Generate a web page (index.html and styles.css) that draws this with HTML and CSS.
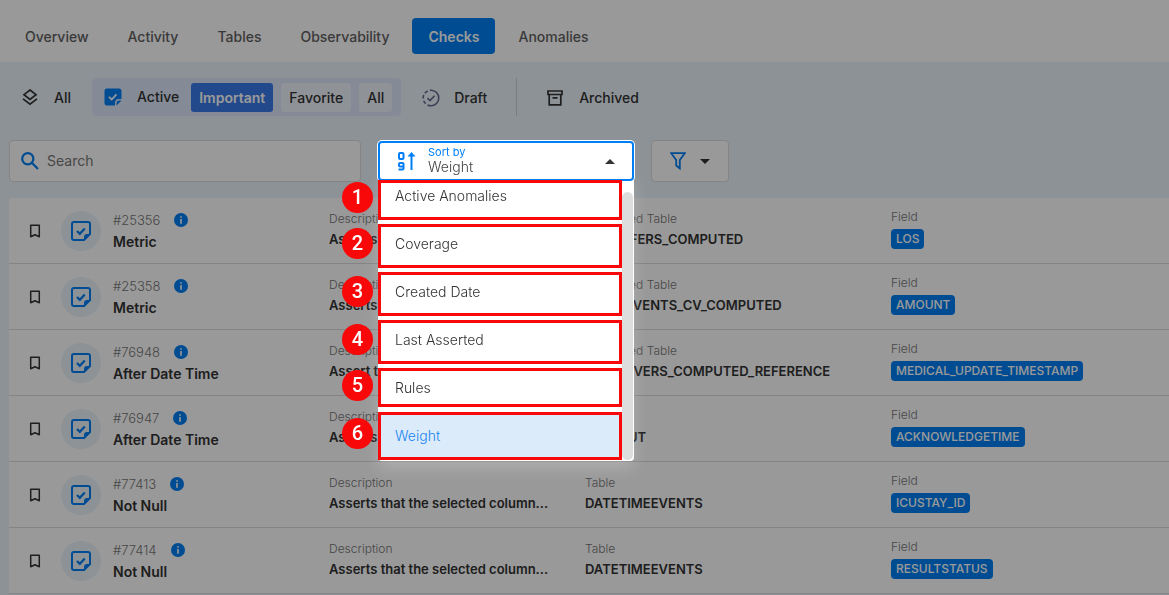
FILE: index.html
```html
<!DOCTYPE html>
<html lang="en">

<head>
    <meta charset="UTF-8">
    <meta name="viewport" content="width=device-width, initial-scale=1.0">
    <title>Checks</title>
    <link rel="stylesheet" href="styles.css">
</head>

<body>
    <!-- shared icons -->
    <svg class="sprite" aria-hidden="true">
        <symbol id="bookmark" viewBox="0 0 16 16">
            <path d="M3.7 2.2h8.6v11.6L8 11.8l-4.3 2z" fill="none" stroke="currentColor" stroke-width="1.5" stroke-linejoin="round" />
        </symbol>
        <symbol id="check" viewBox="0 0 20 20">
            <path d="M19 13V3a2 2 0 0 0-2-2H3a2 2 0 0 0-2 2v14a2 2 0 0 0 2 2h10z" fill="none" stroke="currentColor" stroke-width="2" stroke-linejoin="round" />
            <path d="M13 19.800V16q0-3 3-3h3.800z" fill="currentColor" />
            <path d="M6 10l2.800 2.800 5-5.400" fill="none" stroke="currentColor" stroke-width="2.200" />
        </symbol>
        <symbol id="info" viewBox="0 0 14 14">
            <circle cx="7" cy="7" r="7" fill="currentColor" />
            <path d="M6.200 3.200h1.600v1.600H6.200zM6.200 6h1.600v4.800H6.200z" fill="#fff" />
        </symbol>
    </svg>

    <header>
        <nav>
            <a href="#">Overview</a>
            <a href="#">Activity</a>
            <a href="#">Tables</a>
            <a href="#">Observability</a>
            <a href="#" class="current">Checks</a>
            <a href="#">Anomalies</a>
        </nav>
    </header>

    <main>
        <div class="filters">
            <button class="filter">
                <svg width="16" height="18" viewBox="0 0 16 18" fill="none" stroke="currentColor" stroke-width="1.700">
                    <path d="M8 1l6 4.700-6 4.700-6-4.700z" />
                    <path d="M1 9.800l7 5.400 7-5.400" />
                </svg>
                All
            </button>
            <div class="group">
                <button class="filter">
                    <svg class="blue" width="18" height="18" viewBox="0 0 18 18">
                        <path d="M3 .5h12A2.500 2.500 0 0 1 17.500 3v8h-2.500q-4 0-4 4v2.500H3A2.500 2.500 0 0 1 .5 15V3A2.500 2.500 0 0 1 3 .5z" fill="currentColor" />
                        <path d="M12.500 17.500v-2q0-3 3-3h2z" fill="currentColor" />
                        <path d="M5 8.800l2.700 2.700 4.800-5.100" fill="none" stroke="#fff" stroke-width="1.700" />
                    </svg>
                    Active
                </button>
                <button class="pill selected">Important</button>
                <button class="pill">Favorite</button>
                <button class="pill">All</button>
            </div>
            <button class="filter draft">
                <svg width="18" height="18" viewBox="0 0 18 18" fill="none" stroke="currentColor" stroke-width="1.600">
                    <path d="M9 1.200a7.800 7.800 0 0 1 0 15.600" />
                    <path d="M9 16.800a7.800 7.800 0 0 1 0-15.600" stroke-dasharray="3.600 2.200" />
                    <path d="M5.500 9.200l2.500 2.400 4.600-4.800" />
                </svg>
                Draft
            </button>
            <button class="filter archived">
                <svg width="16" height="16" viewBox="0 0 16 16" fill="none" stroke="currentColor" stroke-width="1.700">
                    <path d="M1 1h14v3.500H1zM2.200 4.500v10.300h11.600V4.500M5.500 7.800h5" />
                </svg>
                Archived
            </button>
        </div>

        <div class="toolbar">
            <div class="search">
                <svg width="18" height="18" viewBox="0 0 18 18" fill="none" stroke="currentColor" stroke-width="2.200">
                    <circle cx="6.800" cy="6.800" r="5.600" />
                    <path d="M10.800 10.800l6.200 6.200" />
                </svg>
                <input type="search" placeholder="Search" aria-label="Search">
            </div>

            <div class="sort">
                <div class="field">
                    <svg width="18" height="20" viewBox="0 0 18 20" fill="none" stroke="currentColor" stroke-width="2">
                        <rect x="1" y="2" width="4.500" height="6" rx="1" />
                        <path d="M.5 18.500h4a1 1 0 0 0 1-1v-4.500a1 1 0 0 0-1-1H2a1 1 0 0 0-1 1v1.500a1 1 0 0 0 1 1h3.500" />
                        <path d="M13.500 19V3" />
                        <path d="M9.500 5.500l4-4.500 4 4.500z" fill="currentColor" stroke="none" />
                    </svg>
                    <div class="control">
                        <label for="sort">Sort by</label>
                        <select id="sort">
                            <option>Weight</option>
                        </select>
                    </div>
                    <svg class="caret" width="10" height="5" viewBox="0 0 10 5">
                        <path d="M0 5l5-5 5 5z" fill="currentColor" />
                    </svg>
                </div>
                <div class="menu">
                    <ul role="listbox" aria-label="Sort by">
                        <li role="option">Active Anomalies<span class="mark first"><b>1</b></span></li>
                        <li role="option">Coverage<span class="mark"><b>2</b></span></li>
                        <li role="option">Created Date<span class="mark"><b>3</b></span></li>
                        <li role="option">Last Asserted<span class="mark"><b>4</b></span></li>
                        <li role="option">Rules<span class="mark short"><b>5</b></span></li>
                        <li role="option" aria-selected="true">Weight<span class="mark full"><b>6</b></span></li>
                    </ul>
                    <div class="scrollbar"></div>
                </div>
            </div>

            <button class="funnel" aria-label="Filter">
                <svg class="blue" width="16" height="18" viewBox="0 0 16 18" fill="none" stroke="currentColor" stroke-width="1.800">
                    <path d="M1.200 1.200h13.600L9.800 8v8.500L6.200 13.500V8z" />
                </svg>
                <svg width="10" height="5" viewBox="0 0 10 5">
                    <path d="M0 0l5 5 5-5z" fill="currentColor" />
                </svg>
            </button>
        </div>

        <ul class="checks">
            <li>
                <button class="save" aria-label="Bookmark"><svg width="16" height="16"><use href="#bookmark" /></svg></button>
                <span class="avatar"><svg width="20" height="20"><use href="#check" /></svg></span>
                <div class="name">
                    <p>#25356 <svg width="14" height="14"><use href="#info" /></svg></p>
                    <h3>Metric</h3>
                </div>
                <div class="cell">
                    <p>Description</p>
                    <strong>Asserts that the selected column...</strong>
                </div>
                <div class="cell">
                    <p>Computed Table</p>
                    <strong>TRANSFERS_COMPUTED</strong>
                </div>
                <div class="cell tagged">
                    <p>Field</p>
                    <span class="tag">LOS</span>
                </div>
            </li>
            <li>
                <button class="save" aria-label="Bookmark"><svg width="16" height="16"><use href="#bookmark" /></svg></button>
                <span class="avatar"><svg width="20" height="20"><use href="#check" /></svg></span>
                <div class="name">
                    <p>#25358 <svg width="14" height="14"><use href="#info" /></svg></p>
                    <h3>Metric</h3>
                </div>
                <div class="cell">
                    <p>Description</p>
                    <strong>Asserts that the selected column...</strong>
                </div>
                <div class="cell">
                    <p>Computed Table</p>
                    <strong>INPUTEVENTS_CV_COMPUTED</strong>
                </div>
                <div class="cell tagged">
                    <p>Field</p>
                    <span class="tag">AMOUNT</span>
                </div>
            </li>
            <li>
                <button class="save" aria-label="Bookmark"><svg width="16" height="16"><use href="#bookmark" /></svg></button>
                <span class="avatar"><svg width="20" height="20"><use href="#check" /></svg></span>
                <div class="name">
                    <p>#76948 <svg width="14" height="14"><use href="#info" /></svg></p>
                    <h3>After Date Time</h3>
                </div>
                <div class="cell">
                    <p>Description</p>
                    <strong>Assert that the selected column...</strong>
                </div>
                <div class="cell">
                    <p>Computed Table</p>
                    <strong>CAREGIVERS_COMPUTED_REFERENCE</strong>
                </div>
                <div class="cell tagged">
                    <p>Field</p>
                    <span class="tag">MEDICAL_UPDATE_TIMESTAMP</span>
                </div>
            </li>
            <li>
                <button class="save" aria-label="Bookmark"><svg width="16" height="16"><use href="#bookmark" /></svg></button>
                <span class="avatar"><svg width="20" height="20"><use href="#check" /></svg></span>
                <div class="name">
                    <p>#76947 <svg width="14" height="14"><use href="#info" /></svg></p>
                    <h3>After Date Time</h3>
                </div>
                <div class="cell">
                    <p>Description</p>
                    <strong>Asserts that the selected column...</strong>
                </div>
                <div class="cell">
                    <p>Table</p>
                    <strong>CALLOUT</strong>
                </div>
                <div class="cell tagged">
                    <p>Field</p>
                    <span class="tag">ACKNOWLEDGETIME</span>
                </div>
            </li>
            <li>
                <button class="save" aria-label="Bookmark"><svg width="16" height="16"><use href="#bookmark" /></svg></button>
                <span class="avatar"><svg width="20" height="20"><use href="#check" /></svg></span>
                <div class="name">
                    <p>#77413 <svg width="14" height="14"><use href="#info" /></svg></p>
                    <h3>Not Null</h3>
                </div>
                <div class="cell">
                    <p>Description</p>
                    <strong>Asserts that the selected column...</strong>
                </div>
                <div class="cell">
                    <p>Table</p>
                    <strong>DATETIMEEVENTS</strong>
                </div>
                <div class="cell tagged">
                    <p>Field</p>
                    <span class="tag">ICUSTAY_ID</span>
                </div>
            </li>
            <li>
                <button class="save" aria-label="Bookmark"><svg width="16" height="16"><use href="#bookmark" /></svg></button>
                <span class="avatar"><svg width="20" height="20"><use href="#check" /></svg></span>
                <div class="name">
                    <p>#77414 <svg width="14" height="14"><use href="#info" /></svg></p>
                    <h3>Not Null</h3>
                </div>
                <div class="cell">
                    <p>Description</p>
                    <strong>Asserts that the selected column...</strong>
                </div>
                <div class="cell">
                    <p>Table</p>
                    <strong>DATETIMEEVENTS</strong>
                </div>
                <div class="cell tagged">
                    <p>Field</p>
                    <span class="tag">RESULTSTATUS</span>
                </div>
            </li>
        </ul>
    </main>

    <div class="overlay"></div>
</body>

</html>
```
FILE: styles.css
```css
* {
    box-sizing: border-box;
    margin: 0;
    padding: 0;
    font-family: Inter, 'Open Sans', 'Liberation Sans', sans-serif;
}

body {
    min-height: 100vh;
    background: #ecf4fa;
    color: #333;
    font-size: 14px;
    line-height: 20px;
    overflow: hidden;
}

ul {
    list-style: none;
}

button {
    border: 0;
    background: none;
    color: inherit;
    font-size: 14px;
    line-height: 20px;
    cursor: pointer;
}

svg {
    display: block;
    flex: none;
}

.sprite {
    position: absolute;
    width: 0;
    height: 0;
}

.blue {
    color: #007ff5;
}

.overlay {
    position: fixed;
    inset: 0;
    background: rgba(0, 0, 0, 0.4);
    z-index: 1;
}

header {
    background: #fff;
    padding: 18px 9px 8px;
}

nav {
    display: flex;
    gap: 7px;

    a {
        padding: 9px 16px 7px;
        border-radius: 4px;
        color: #5f5f5f;
        font-weight: 500;
        text-decoration: none;
    }

    .current {
        background: #007ff5;
        color: #fff;
        font-weight: 600;
    }
}

main {
    padding: 16px 0 0 9px;
}

.filters {
    display: flex;
    align-items: center;
    margin-bottom: 24px;
}

.filter {
    display: flex;
    align-items: center;
    gap: 16px;
    height: 38px;
    padding: 1px 13px 0;
    font-weight: 500;
}

.group {
    display: flex;
    align-items: center;
    gap: 8px;
    margin: 0 8px;
    padding-right: 9px;
    border-radius: 4px;
    background: #dde8fa;

    .filter {
        gap: 15px;
        padding: 0 4px 0 12px;
    }
}

.pill {
    padding: 5px 8px 4px;
    height: 29px;
    border-radius: 3px;
    background: #eff4fc;
    font-weight: 500;

    &.selected {
        background: #3a7bea;
        color: #fff;
        font-weight: 600;
    }
}

.draft {
    gap: 14px;

    svg {
        color: #66688c;
    }
}

.archived {
    margin-left: 16px;
    padding-left: 30px;
    border-left: 1px solid #c8d0d8;
}

.toolbar {
    display: grid;
    grid-template-columns: minmax(0, 352px) minmax(0, 256px) 78px;
    gap: 17px;
    height: 42px;
    margin-bottom: 16px;
}

.search {
    display: flex;
    align-items: center;
    gap: 8px;
    padding: 0 11px;
    border: 1px solid #dcdcdc;
    border-radius: 4px;
    background: #fff;
    color: #007ff5;

    input {
        flex: 1;
        min-width: 0;
        border: 0;
        outline: 0;
        background: none;
        font-size: 14px;
        line-height: 20px;
    }

    input::placeholder {
        color: #777;
    }
}

.funnel {
    display: flex;
    align-items: center;
    justify-content: center;
    gap: 14px;
    border: 1px solid #dcdcdc;
    border-radius: 4px;
    background: #fff;
}

.sort {
    position: relative;
    z-index: 2;
    padding: 1px 0;
}

.field {
    position: relative;
    z-index: 1;
    display: flex;
    align-items: center;
    gap: 12px;
    height: 40px;
    padding: 0 17px 0 18px;
    border: 2px solid #007ff5;
    border-radius: 4px;
    background: #fff;
    color: #007ff5;
    box-shadow: 0 0 0 1px #fff;
}

.control {
    display: flex;
    flex: 1;
    flex-direction: column;

    label {
        font-size: 11px;
        line-height: 12px;
    }

    select {
        appearance: none;
        border: 0;
        outline: 0;
        background: none;
        color: #444;
        font-size: 14px;
        font-weight: 300;
        line-height: 18px;
    }
}

.caret {
    color: #333;
}

.menu {
    position: absolute;
    top: 32px;
    left: 0;
    right: 0;
    display: flex;
    padding-bottom: 1px;
    border-radius: 4px;
    background: #fff;
    box-shadow: 0 8px 16px rgba(255, 255, 255, 0.2);

    ul {
        flex: 1;
    }

    li {
        position: relative;
        height: 48px;
        padding: 14px 17px;
        color: #333;
        font-weight: 300;
    }

    [aria-selected] {
        background: #dcebfa;
        color: #1a86f0;
    }
}

.scrollbar {
    width: 11px;
    margin: 20px 1px 0 0;
    border-radius: 6px;
    background: #ddd;
}

/* numbered frames over the options */
.mark {
    position: absolute;
    inset: 4px 0 0;
    z-index: 2;
    border: 3px solid #f80808;

    &.first {
        top: 8px;
    }

    &.short {
        bottom: 5px;
    }

    &.full {
        top: 0;
    }

    b {
        position: absolute;
        top: calc(50% - 18px);
        left: -39px;
        width: 31px;
        height: 31px;
        border-radius: 50%;
        background: #f80808;
        color: #fff;
        font-family: Roboto, sans-serif;
        font-size: 20px;
        font-weight: 500;
        line-height: 31px;
        text-align: center;
    }
}

.checks {
    border-radius: 4px 0 0;
    background: #fff;

    li {
        display: grid;
        grid-template-columns: 52px 52px 216fr 256fr 306fr 278fr;
        align-items: center;
        height: 66px;
        border-bottom: 1px solid #dcdcdc;
    }
}

.save {
    padding-left: 18px;
}

.avatar {
    display: grid;
    place-content: center;
    width: 40px;
    height: 40px;
    border-radius: 50%;
    background: #ecf4fa;
    color: #007ff5;
}

.name {
    min-width: 0;
    padding-top: 3px;

    p {
        display: flex;
        align-items: center;
        gap: 14px;
        color: #777;
        font-size: 13px;
        font-weight: 300;
    }

    svg {
        color: #007ff5;
    }

    h3 {
        font-size: 14px;
        font-weight: 600;
        line-height: 24px;
    }
}

.cell {
    min-width: 0;
    padding-bottom: 3px;

    p {
        color: #777;
        font-size: 12px;
        font-weight: 300;
    }

    strong {
        display: block;
        overflow: hidden;
        font-size: 13px;
        font-weight: 600;
        white-space: nowrap;
        text-overflow: ellipsis;
    }
}

.tag {
    display: table;
    padding: 0 5px;
    border-radius: 4px;
    background: #007ff5;
    color: #fff;
    font-size: 12px;
    font-weight: 500;
}

.tagged p {
    margin-bottom: 4px;
    line-height: 16px;
}
```
